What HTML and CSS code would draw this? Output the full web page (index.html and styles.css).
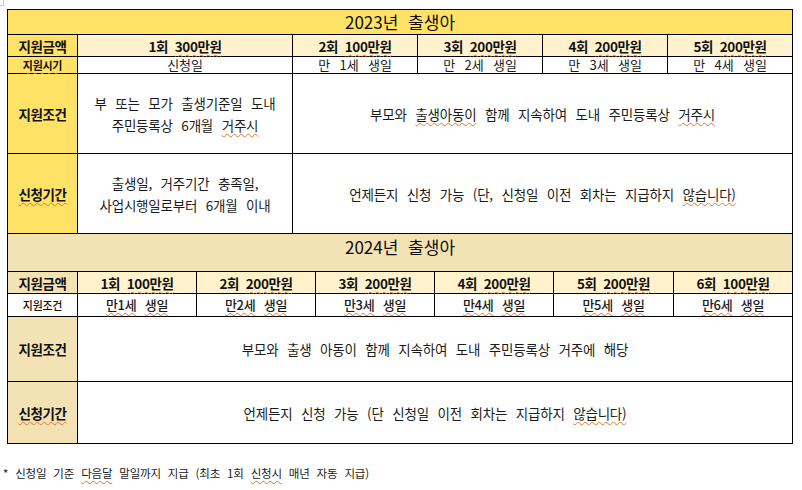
FILE: index.html
```html
<!DOCTYPE html>
<html lang="ko">
<head>
<meta charset="utf-8">
<title>출생아 지원</title>
<link rel="stylesheet" href="styles.css">
</head>
<body>
<div class="corner"></div>
<div class="sheet">
  <div class="grid g23">
    <div class="c title t23"><span>2023년 출생아</span></div>
    <div class="c lab gold"><span>지원금액</span></div>
    <div class="c amt"><span>1회&nbsp; <span class="sp">300만원</span></span></div>
    <div class="c amt"><span>2회&nbsp; <span class="sp">100만원</span></span></div>
    <div class="c amt"><span>3회&nbsp; <span class="sp">200만원</span></span></div>
    <div class="c amt"><span>4회&nbsp; <span class="sp">200만원</span></span></div>
    <div class="c amt"><span>5회&nbsp; <span class="sp">200만원</span></span></div>
    <div class="c lab gold small"><span class="sp">지원시기</span></div>
    <div class="c age"><span>신청일</span></div>
    <div class="c age"><span>만 1세 생일</span></div>
    <div class="c age"><span>만 2세 생일</span></div>
    <div class="c age"><span>만 3세 생일</span></div>
    <div class="c age"><span>만 4세 생일</span></div>
    <div class="c lab gold"><span>지원조건</span></div>
    <div class="c txt"><span>부 또는 모가 출생기준일 도내<br>주민등록상 6개월 <span class="sp">거주시</span></span></div>
    <div class="c txt wide4"><span>부모와 <span class="sp">출생아동이</span> 함께 지속하여 도내 주민등록상 <span class="sp">거주시</span></span></div>
    <div class="c lab gold"><span class="sp">신청기간</span></div>
    <div class="c txt"><span>출생일, 거주기간 충족일,<br>사업시행일로부터 6개월 이내</span></div>
    <div class="c txt wide4"><span>언제든지 신청 가능 (단, 신청일 이전 회차는 지급하지 <span class="sp">않습니다)</span></span></div>
  </div>
  <div class="grid g24">
    <div class="c title t24"><span>2024년 출생아</span></div>
    <div class="c lab tan"><span>지원금액</span></div>
    <div class="c amt"><span>1회&nbsp; <span class="sp">100만원</span></span></div>
    <div class="c amt"><span>2회&nbsp; <span class="sp">200만원</span></span></div>
    <div class="c amt"><span>3회&nbsp; <span class="sp">200만원</span></span></div>
    <div class="c amt"><span>4회&nbsp; <span class="sp">200만원</span></span></div>
    <div class="c amt"><span>5회&nbsp; <span class="sp">200만원</span></span></div>
    <div class="c amt"><span>6회&nbsp; <span class="sp">100만원</span></span></div>
    <div class="c lab small plain"><span>지원조건</span></div>
    <div class="c age2"><span><span class="sp">만1세</span> <span class="sp">생일</span></span></div>
    <div class="c age2"><span><span class="sp">만2세</span> <span class="sp">생일</span></span></div>
    <div class="c age2"><span><span class="sp">만3세</span> <span class="sp">생일</span></span></div>
    <div class="c age2"><span><span class="sp">만4세</span> <span class="sp">생일</span></span></div>
    <div class="c age2"><span><span class="sp">만5세</span> <span class="sp">생일</span></span></div>
    <div class="c age2"><span><span class="sp">만6세</span> <span class="sp">생일</span></span></div>
    <div class="c lab tan"><span>지원조건</span></div>
    <div class="c txt wide6"><span>부모와 출생 아동이 함께 지속하여 도내 주민등록상 거주에 해당</span></div>
    <div class="c lab tan"><span class="sp">신청기간</span></div>
    <div class="c txt wide6"><span>언제든지 신청 가능 (단 신청일 이전 회차는 지급하지 <span class="sp">않습니다)</span></span></div>
  </div>
</div>
<p class="note">* 신청일 기준 <span class="sp">다음달</span> 말일까지 지급 (최초 1회 <span class="sp">신청시</span> 매년 자동 지급)</p>
</body>
</html>
```

FILE: styles.css
```css
html, body {
  margin: 0;
  padding: 0;
  background: #ffffff;
}

body {
  position: relative;
  width: 802px;
  height: 490px;
  overflow: hidden;
  font-family: "Noto Sans CJK KR", "Noto Sans", sans-serif;
  color: #1b1b1b;
}

.corner {
  position: absolute;
  left: 0;
  top: 0;
  width: 3px;
  height: 5px;
  border-right: 1px solid #c8c8c8;
  border-bottom: 1px solid #c8c8c8;
}

.sheet {
  margin: 9px 0 0 7px;
  width: 786px;
}

.grid {
  display: grid;
  background: #000;
  gap: 1px;
  padding: 1px;
}

.g23 {
  grid-template-columns: 69px 214px 124px 124px 124px 124px;
  grid-template-rows: 24px 21px 16px 79px 79px;
}

.g24 {
  padding-top: 0;
  grid-template-columns: 69px 118px 118px 118px 118px 119px 118px;
  grid-template-rows: 37px 21px 22px 64px 61px;
}

.c {
  background: #fff;
  display: flex;
  align-items: center;
  justify-content: center;
  text-align: center;
  white-space: nowrap;
  min-height: 0;
}

.title {
  font-size: 17px;
  color: #0c0c0c;
  letter-spacing: 0;
  word-spacing: 5px;
  line-height: 20px;
}

.t23 {
  grid-column: 1 / span 6;
  background: #ffe266;
}

.t24 {
  grid-column: 1 / span 7;
  background: #f3e3b4;
  align-items: flex-start;
  padding-top: 3px;
}

.lab {
  font-weight: 700;
  font-size: 13.5px;
  color: #111;
  letter-spacing: -0.4px;
  line-height: 18px;
}

.lab.small {
  font-size: 11px;
  letter-spacing: -0.3px;
  line-height: 14px;
}

.lab.plain {
  font-weight: 500;
}

.gold {
  background: #ffe266;
}

.tan {
  background: #f3e3b4;
}

.amt {
  background: #fff2cc;
  font-weight: 700;
  font-size: 13.5px;
  color: #111;
  letter-spacing: -0.4px;
  line-height: 18px;
}

.age {
  font-size: 13px;
  letter-spacing: -0.1px;
  word-spacing: 6px;
  line-height: 16px;
}

.age2 {
  font-size: 13px;
  font-weight: 500;
  letter-spacing: -0.3px;
  word-spacing: 5px;
  line-height: 18px;
}

.txt {
  font-size: 13.5px;
  line-height: 22px;
  letter-spacing: -0.2px;
  word-spacing: 5px;
}

.wide4 {
  grid-column: span 4;
}

.wide6 {
  grid-column: span 6;
}

.sp {
  text-decoration: underline wavy #e8752c;
  text-decoration-thickness: 1px;
  text-underline-offset: 2px;
}

.note {
  margin: 21px 0 0 3px;
  font-size: 11.5px;
  line-height: 16px;
  letter-spacing: -0.2px;
  word-spacing: 4px;
  color: #1b1b1b;
}
```
